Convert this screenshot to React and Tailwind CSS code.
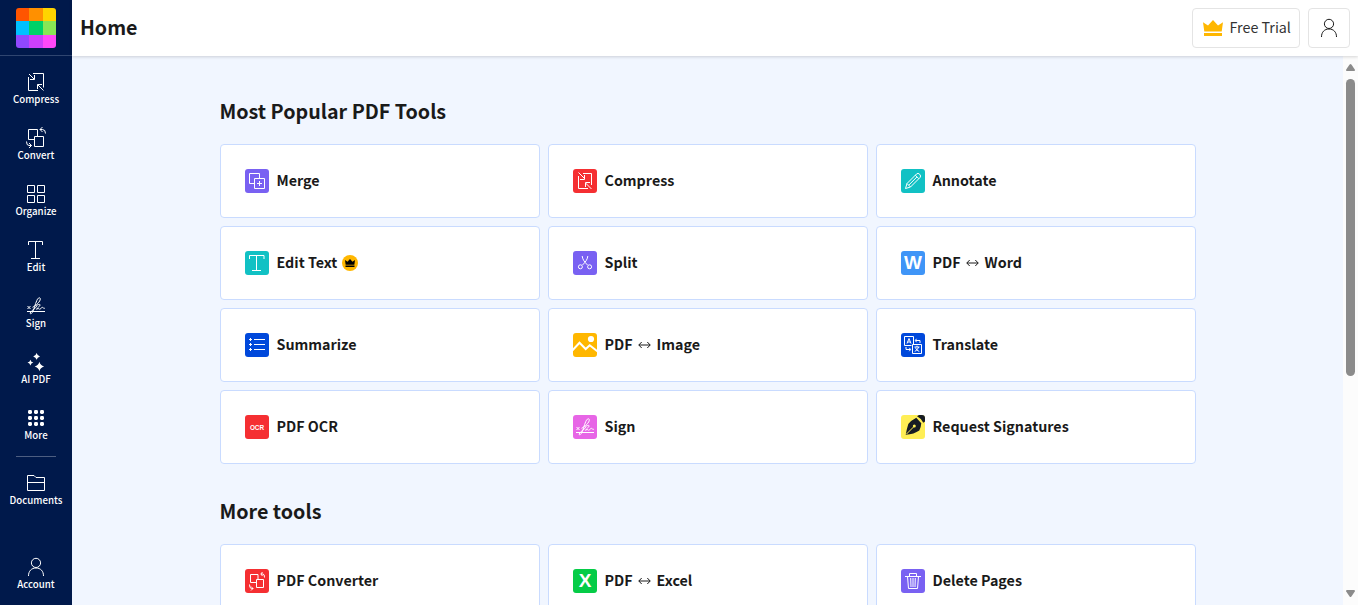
const FONT = "font-['Noto_Sans_CJK_SC','Open_Sans',sans-serif]";

const sparkle = (x, y, r) =>
  `M${x} ${y - r}Q${x + r * 0.2} ${y - r * 0.2} ${x + r} ${y}Q${x + r * 0.2} ${y + r * 0.2} ${x} ${y + r}Q${x - r * 0.2} ${y + r * 0.2} ${x - r} ${y}Q${x - r * 0.2} ${y - r * 0.2} ${x} ${y - r}Z`;

function Line({ children, className = '' }) {
  return (
    <svg viewBox="0 0 24 24" className={`size-6 shrink-0 ${className}`} fill="none" stroke="currentColor" strokeWidth="1">
      {children}
    </svg>
  );
}

const CompressShape = () => (
  <path d="M4.500 7v13.500H14M9 3.500h10.500V17.500M5 4l5.300 5.300M10.500 5v4.500H6M19.500 20.500l-5.800-5.800M13.500 19v-4.500H18" />
);

const ConvertShape = () => (
  <path d="M10.500 13.500h-6v-10h9v7M10.500 10.500h9v10h-9zM18.500 1l-2.500 2.500 2.500 2.500M16 3.500h2.500q3 0 3 4M5 17l2.500 2.500L5 22M7.500 19.500H5q-2.500 0-2.500-4" />
);

const SignShape = () => (
  <>
    <path d="M3 17.500h18M3.500 12l3 3M6.500 12l-3 3" />
    <path d="M8.500 13.300C12 11.500 16.500 7.500 16.300 4.800 16.200 3 14 3.500 12.800 6.500c-1.800 4-2.500 8.500-4.500 12-1.300 2-3 1.500-1.600-.5 1.800-2.500 4.800-3 6.300-6.500M12.500 11.600c1.300-1.100 3.300-1.600 3.700-.8.300 1-3 2.700-3.600 4.500 1.300-1 2.600-.8 3 0 .5.800 1.600-2 2.700-2 .8 0 .6 1.200 2.500 1" />
  </>
);

const PersonShape = () => (
  <>
    <circle cx="12" cy="7.900" r="4.600" />
    <path d="M4.500 21c0-5 3-8 7.500-8s7.500 3 7.500 8" />
  </>
);

const SIDE = [
  ['Compress', <Line><CompressShape /></Line>],
  ['Convert', <Line><ConvertShape /></Line>],
  ['Organize', <Line><path d="M3.500 3.500h7v7h-7zM13.500 3.500h7v7h-7zM3.500 13.500h7v7h-7zM13.500 13.500h7v7h-7z" /></Line>],
  ['Edit', <Line><path d="M4.500 7V3.500h14V7M11.500 3.500v17M7 20.500h9" /></Line>],
  ['Sign', <Line><SignShape /></Line>],
  ['AI PDF', (
    <Line>
      <path fill="currentColor" stroke="none" d={sparkle(15.4, 16.5, 4.7) + sparkle(12.6, 6.4, 3.4) + sparkle(6.4, 12.6, 2.9)} />
    </Line>
  )],
  ['More', (
    <Line>
      <g fill="currentColor" stroke="none">
        {[6, 12, 18].map((y) => [6, 12, 18].map((x) => <rect key={`${x}-${y}`} x={x - 2} y={y - 2} width="4" height="4" rx="1.4" />))}
      </g>
    </Line>
  )],
];

function SideItem({ label, icon }) {
  return (
    <div className="flex h-14 flex-col items-center pt-2.5">
      {icon}
      <span className="-mt-px text-[9.7px] leading-3 font-medium whitespace-nowrap">{label}</span>
    </div>
  );
}

function Tile({ bg, children }) {
  return (
    <span className={`flex size-6 shrink-0 overflow-hidden rounded-[3px] text-white ${bg}`}>
      {children}
    </span>
  );
}

const Crown = ({ className }) => (
  <svg viewBox="0 0 20 16" className={className} fill="currentColor">
    <path d="M0 2.200l5 3.300L10 0l5 5.500 5-3.300L18.700 11.500H1.300zM1 13h18v3H1z" />
  </svg>
);

const Both = () => (
  <svg viewBox="0 0 13 8" className="mr-1.5 ml-[5px] h-2 w-[13px]" fill="none" stroke="currentColor" strokeWidth="1">
    <path d="M.8 4h11.400M3.700 1L.8 4l2.900 3M9.300 1l2.900 3-2.900 3" />
  </svg>
);

const Letter = ({ children }) => (
  <span className="flex size-6 items-center justify-center font-['Liberation_Sans',sans-serif] text-[19px] leading-6 font-bold">
    {children}
  </span>
);

const POPULAR = [
  [['Merge'], 'bg-[#7961f2]', <Line><path d="M9 14.500H4.500v-10h10V9M9.500 9.500h10v10h-10zM14.500 12v5M12 14.500h5" /></Line>],
  [['Compress'], 'bg-[#f52f32]', <Line><path d="M5.500 7v12.500H15M10 4.500h8.500V16M5.500 3.500l6 6M11.500 6v4.500H7M18.500 20l-6-6M12.500 18v-4.500H17" /></Line>],
  [['Annotate'], 'bg-[#11c1c4]', <Line><path d="M4.500 19.500l1.500-5L15.500 5q1.500-1.500 3.200.3t.3 3.200L9.500 18zM6 14.500l3.500 3.500M14.300 6.200l3.500 3.500M7.700 16.200L16 7.900" /></Line>],
  [['Edit Text'], 'bg-[#11c1c4]', <Line><path d="M4.500 8V4.500h14.500V8M11.500 4.500v15M7 19.500h9" /></Line>, true],
  [['Split'], 'bg-[#7961f2]', <Line><path d="M9.200 5c.3 3 1.700 5.500 5.300 9M14.800 5c-.3 3-1.700 5.500-5.300 9" /><circle cx="7.400" cy="15.800" r="2" /><circle cx="16.600" cy="15.800" r="2" /></Line>],
  [['PDF', 'Word'], 'bg-[#3f95f7]', <Letter>W</Letter>],
  [['Summarize'], 'bg-[#0048db]', <Line><path d="M9 6.500h11M9 11.500h11M9 16.500h11" /><path d="M4 6.500h3M5.500 5v3M4 11.500h3M5.500 10v3M4 16.500h3M5.500 15v3" /></Line>],
  [['PDF', 'Image'], 'bg-[#ffb700]', <Line><path strokeWidth="2" d="M-1 17.800l7.500-8 6.200 6.200 4-3.800L25 18.800" /><circle cx="18" cy="6" r="3.100" fill="currentColor" stroke="none" /></Line>],
  [['Translate'], 'bg-[#0048db]', (
    <Line>
      <path d="M10.500 12.500h-7v-9h9v8M11.500 11.500h9v9h-9z" />
      <path d="M6 10.500l2-5 2 5M6.700 9h2.600M13.500 14h5M16 12.700V14M17.700 14q-1 3-4 4.500M14.300 14.500q1.200 3 4 4M15.500 5.800L14.300 7.500l1.200 1.700M14.500 7.500h4.500v2.500M8.300 14.800l1.300 1.700-1.300 1.700M9.500 16.500h-4.500v-2.500" />
    </Line>
  )],
  [['PDF OCR'], 'bg-[#f52f32]', (
    <span className="flex size-6 items-center justify-center pt-px font-['Liberation_Sans',sans-serif] text-[6.400px] leading-3 font-bold">OCR</span>
  )],
  [['Sign'], 'bg-[#e765e6]', <Line><SignShape /></Line>],
  [['Request Signatures'], 'bg-[#ffee55]', (
    <Line className="text-[#171c24]">
      <path fill="currentColor" stroke="none" d="M4.700 19.700Q6 13 7.300 9q3-3.700 8-6.200l5 5.400q-.3 4-2 7.200-5 3.600-13.600 4.300zM16 1.200L18 0h6v6.500l-1.700 1.200Q20.500 3.500 16 1.200z" />
      <path stroke="#ffee55" d="M5.500 19l7-7" />
      <circle cx="13.300" cy="11" r="1.500" fill="#ffee55" stroke="none" />
    </Line>
  )],
];

const MORE = [
  [['PDF Converter'], 'bg-[#f52f32]', (
    <Line><path d="M11 13.500H5.500v-8h7.500v5M11.500 10.500h7v8h-7zM17.500 3l-1.700 2 1.700 2M16 5h2q1.500 0 1.500 3.500M6 17.500l2 2-2 2M8 19.500H6.500q-2 0-2-4" /></Line>
  )],
  [['PDF', 'Excel'], 'bg-[#05cc47]', <Letter>X</Letter>],
  [['Delete Pages'], 'bg-[#7961f2]', <Line><path d="M4 7.500h16M8.500 7V4.500h7V7M6.500 7.500l1 12h9l1-12M9.700 9l.3 9M12 9v9M14.300 9l-.3 9" /></Line>],
];

function Card({ parts, bg, icon, premium }) {
  return (
    <div className="flex h-[74px] items-center gap-[7.500px] rounded border border-[#c9dbff] bg-white px-6">
      <Tile bg={bg}>{icon}</Tile>
      <div className="flex items-center text-[14.300px] leading-6 font-bold whitespace-nowrap">
        <span className="-mt-px mb-px">{parts[0]}</span>
        {parts[1] && <><Both /><span className="-mt-px mb-px">{parts[1]}</span></>}
        {premium && (
          <span className="ml-[5px] flex size-4 items-center justify-center rounded-full bg-[#ffb700] text-black">
            <Crown className="h-2 w-2.5" />
          </span>
        )}
      </div>
    </div>
  );
}

function Section({ title, items }) {
  return (
    <section>
      <h2 className="-mt-px -ml-[0.5px] text-[19.700px] leading-8 font-bold">{title}</h2>
      <div className="mt-[17px] grid grid-cols-3 gap-2">
        {items.map(([parts, bg, icon, premium]) => (
          <Card key={parts.join()} parts={parts} bg={bg} icon={icon} premium={premium} />
        ))}
      </div>
    </section>
  );
}

const LOGO = ['bg-[#ff5500]', 'bg-[#ff9000]', 'bg-[#ffd400]', 'bg-[#00c0ff]', 'bg-[#00d168]', 'bg-[#88e655]', 'bg-[#9048ff]', 'bg-[#cc40fb]', 'bg-[#ff48f8]'];

export default function App() {
  return (
    <div className={`flex h-screen overflow-hidden bg-[#f1f6ff] text-[#1a1a1a] ${FONT}`}>
      <nav className="flex w-[72px] shrink-0 flex-col bg-[#00194b] text-white">
        <div className="flex h-14 shrink-0 justify-center border-b border-[#2f4570] pt-2">
          <div className="grid size-10 grid-cols-3 grid-rows-3 overflow-hidden rounded-[3px]">
            {LOGO.map((c) => <span key={c} className={c} />)}
          </div>
        </div>
        <div className="pt-1">
          {SIDE.map(([label, icon]) => <SideItem key={label} label={label} icon={icon} />)}
        </div>
        <div className="mx-4 mt-1 mb-1 h-px bg-[#4d5e81]" />
        <SideItem label="Documents" icon={<Line><path d="M3.500 19.500v-15H10l2 2h8.500v13zM3.500 11.500h17" /></Line>} />
        <div className="mt-auto pb-1">
          <SideItem label="Account" icon={<Line><PersonShape /></Line>} />
        </div>
      </nav>
      <div className="flex min-w-0 flex-1 flex-col">
        <header className="z-10 flex h-14 shrink-0 items-center gap-2 bg-white px-2 shadow-[0_1px_3px_rgba(0,0,0,0.16)]">
          <h1 className="-mt-0.5 flex-1 text-[19.650px] leading-8 font-bold">Home</h1>
          <button className="flex h-10 w-[108px] items-center gap-[6.500px] rounded border border-[#e4e4e4] pl-2.5 text-[14.300px] whitespace-nowrap text-[#333]">
            <Crown className="h-4 w-5 shrink-0 text-[#ffb700]" />
            <span className="mb-0.5">Free Trial</span>
          </button>
          <button className="flex h-10 w-[42px] items-center justify-center rounded border border-[#e4e4e4]">
            <Line><PersonShape /></Line>
          </button>
        </header>
        <div className="flex min-h-0 flex-1">
          <main className="flex-1 overflow-hidden pt-10 pl-[148px]">
            <div className="flex w-[976px] flex-col gap-8">
              <Section title="Most Popular PDF Tools" items={POPULAR} />
              <Section title="More tools" items={MORE} />
            </div>
          </main>
          <div className="flex w-[15px] flex-col items-center bg-[#fcfcfc] pt-2 pb-2 text-[#8b8b8b]">
            <svg viewBox="0 0 9 7" className="h-[7px] w-[9px]" fill="currentColor"><path d="M3.600.6q.9-1 1.800 0L8.800 5.500Q9.200 7 8 7H1Q-.2 7 .2 5.500z" /></svg>
            <div className="mt-2 h-[297px] w-[9px] rounded-full bg-[#8b8b8b]" />
            <svg viewBox="0 0 9 7" className="mt-auto h-[7px] w-[9px] rotate-180" fill="currentColor"><path d="M3.600.6q.9-1 1.800 0L8.800 5.500Q9.200 7 8 7H1Q-.2 7 .2 5.500z" /></svg>
          </div>
        </div>
      </div>
    </div>
  );
}
